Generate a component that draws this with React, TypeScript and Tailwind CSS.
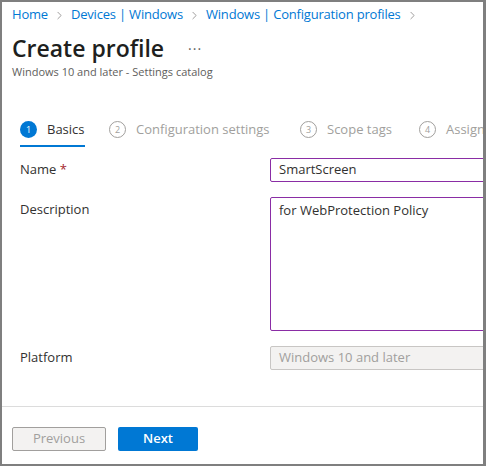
import { ChevronRight } from 'lucide-react';

const font = { fontFamily: '"Open Sans", "Noto Sans", sans-serif' };

function Crumb({ label, last }: { label: string; last?: boolean }) {
  return (
    <div className="flex items-center">
      <span className="text-[#0078d4]">{label}</span>
      <ChevronRight className={`w-[13px] h-[13px] text-[#8a8886] ${last ? 'ml-[5px]' : 'mx-[5px]'}`} strokeWidth={1.5} />
    </div>
  );
}

function Step({ n, label, active, width }: { n: number; label: string; active?: boolean; width: string }) {
  return (
    <div className={`${width} shrink-0 flex flex-col`}>
      <div className="flex items-center h-[26px]">
        <span
          className={`w-[17px] h-[17px] rounded-full flex items-center justify-center text-[9px] leading-none ${
            active ? 'bg-[#0078d4] text-white' : 'border border-[#a19f9d] text-[#a19f9d]'
          }`}
        >
          {n}
        </span>
        <span className={`ml-[10px] text-[13px] whitespace-nowrap ${active ? 'text-[#323130]' : 'text-[#a19f9d]'}`}>{label}</span>
      </div>
      {active && <div className="mt-[2px] h-[2px] w-[65px] bg-[#0078d4]" />}
    </div>
  );
}

export default function App() {
  return (
    <div
      className="w-[486px] h-[466px] bg-white border-t-2 border-l-2 border-b-2 border-r-[3px] border-[#7f7f7f] overflow-hidden flex flex-col"
      style={font}
    >
      <div className="pl-[10px] pt-[6px] flex items-center text-[13px] tracking-[-0.2px] h-[20px] whitespace-nowrap">
        <Crumb label="Home" />
        <Crumb label="Devices | Windows" />
        <Crumb label="Windows | Configuration profiles" last />
      </div>

      <div className="pl-[10px] mt-[12px] flex items-center h-[28px]">
        <h1 className="text-[23px] font-semibold text-[#201f1e] leading-none">Create profile</h1>
        <span className="ml-[24px] text-[#605e5c] text-[14px] tracking-[1px]">···</span>
      </div>
      <div className="pl-[10px] mt-[2px] text-[11px] text-[#605e5c]">Windows 10 and later - Settings catalog</div>

      <div className="pl-[18px] mt-[36px] flex whitespace-nowrap">
        <Step n={1} label="Basics" active width="w-[89px]" />
        <Step n={2} label="Configuration settings" width="w-[191px]" />
        <Step n={3} label="Scope tags" width="w-[119px]" />
        <Step n={4} label="Assignments" width="w-[120px]" />
      </div>

      <div className="pl-[18px] mt-[11px] text-[13px] text-[#323130]">
        <div className="flex items-center h-[24px]">
          <div className="w-[250px] shrink-0">
            Name <span className="text-[#a4262c]">*</span>
          </div>
          <div className="w-[240px] shrink-0 h-[24px] border border-[#8a2da5] rounded-[2px] pl-[8px] flex items-center">
            SmartScreen
          </div>
        </div>

        <div className="flex mt-[15px]">
          <div className="w-[250px] shrink-0 pt-[3px]">Description</div>
          <div className="w-[240px] shrink-0 h-[134px] border border-[#8a2da5] rounded-[2px] pl-[8px] pt-[3px]">
            for WebProtection Policy
          </div>
        </div>

        <div className="flex items-center h-[24px] mt-[15px]">
          <div className="w-[250px] shrink-0">Platform</div>
          <div className="w-[240px] shrink-0 h-[24px] border border-[#c8c6c4] bg-[#f3f2f1] rounded-[2px] pl-[8px] flex items-center text-[#a19f9d]">
            Windows 10 and later
          </div>
        </div>
      </div>

      <div className="mt-[36px] h-px bg-[#dcdcdc]" />

      <div className="pl-[10px] mt-[20px] flex gap-[12px] text-[13px]">
        <button className="w-[94px] h-[24px] border border-[#a19f9d] bg-[#f3f2f1] text-[#a19f9d] rounded-[2px]">Previous</button>
        <button className="w-[80px] h-[24px] bg-[#0078d4] text-white font-semibold rounded-[2px]">Next</button>
      </div>
    </div>
  );
}
